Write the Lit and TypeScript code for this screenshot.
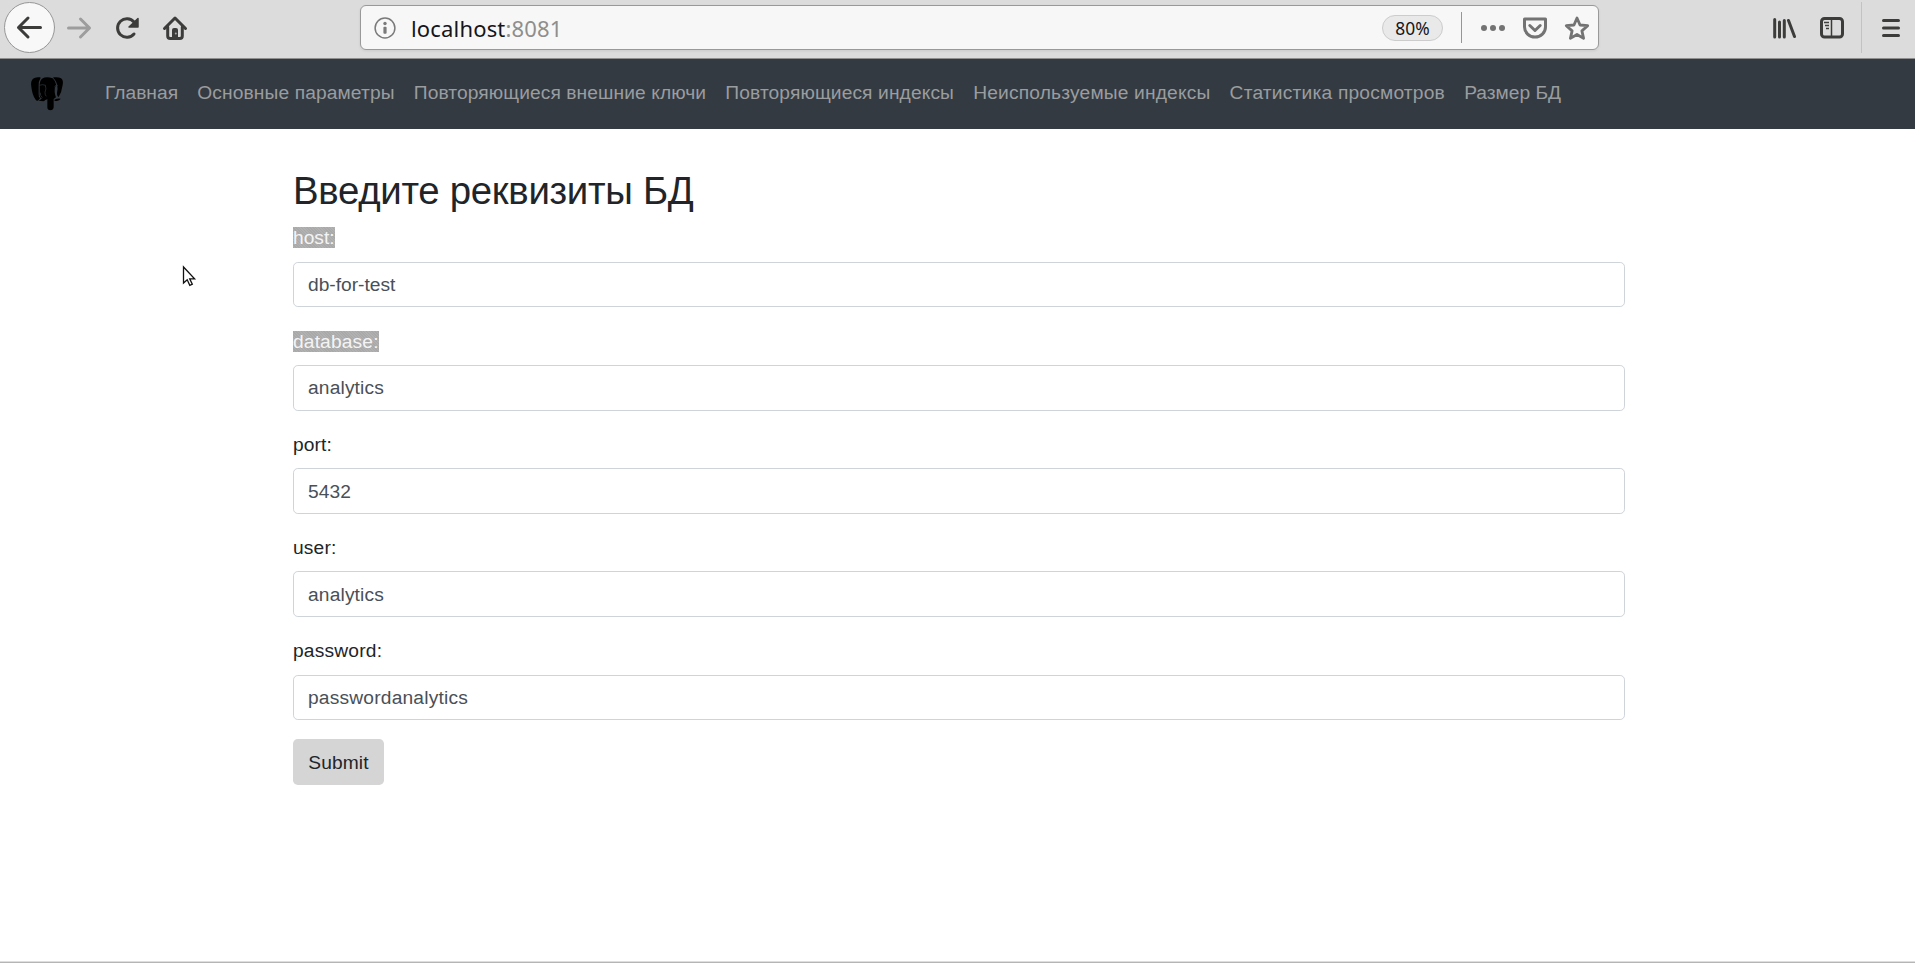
import { LitElement, html, css } from "lit";
import { customElement, property } from "lit/decorators.js";

@customElement("browser-bar")
class BrowserBar extends LitElement {
  static styles = css`
    :host { display: block; }
    .bar { display: flex; align-items: flex-start; height: 58px; background: #dcdcdc; border-bottom: 1px solid #8f8f8f; box-sizing: content-box; }
    svg { display: block; flex: none; }
    .left { display: flex; width: 360px; flex: none; }
    .url { display: flex; align-items: center; box-sizing: border-box; width: 1239px; height: 45px; margin-top: 5px; flex: none; background: #f7f7f7; border: 1px solid #999; border-radius: 6px; box-shadow: 0 1px 3px rgba(0, 0, 0, .08); font-family: "Noto Sans", sans-serif; font-size: 22px; color: #15151a; }
    .info { margin-left: 13px; }
    .address { margin-left: 15px; white-space: nowrap; line-height: 30px; letter-spacing: .17px; }
    .port { color: #8e8e8c; }
    .zoom { margin-left: auto; box-sizing: border-box; width: 61px; height: 26px; border: 1px solid #ccc; border-radius: 13px; background: #e9e9e9; font-size: 17.4px; line-height: 25px; text-align: center; }
    .sep { width: 1px; height: 31px; background: #969696; margin-left: 18px; }
    .actions { margin-left: 13px; margin-right: 5px; }
    .right { margin-left: auto; }
  `;
  render() {
    return html`<div class="bar">
      <div class="left">
        <svg width="200" height="58" viewBox="0 0 200 58" fill="none" stroke="#3c3c3b" stroke-width="3" stroke-linecap="round" stroke-linejoin="round">
          <circle cx="29.5" cy="27.5" r="25" fill="#f8f8f8" stroke="#969696" stroke-width="1"/>
          <path d="M40.5 27.5H18.5M28 18l-9.5 9.5L28 37"/>
          <path stroke="#9d9d9d" d="M68.500 28H89M80.500 19l9 9-9 9"/>
          <path d="M134 34a9.300 9.300 0 1 1 0-12l2 3"/>
          <path fill="#3c3c3b" stroke-width="1.500" d="M138 18.500v8.500h-9z"/>
          <path d="M164.500 28.500L175 18l10.500 10.500"/>
          <path d="M167.700 27v9q0 2.500 2.500 2.500h9.600q2.500 0 2.500-2.500v-9"/>
          <path fill="#3c3c3b" stroke="none" d="M172 38v-8q0-2 2-2h2q2 0 2 2v8z"/>
          <circle cx="175.800" cy="33.500" r="1" fill="#aaa" stroke="none"/>
        </svg>
      </div>
      <div class="url">
        <svg class="info" width="22" height="22" viewBox="0 0 22 22">
          <circle cx="11" cy="11" r="9.900" fill="none" stroke="#7a7a7a" stroke-width="1.500"/>
          <circle cx="11" cy="6.500" r="1.700" fill="#7a7a7a"/>
          <rect x="9.400" y="9.700" width="3.200" height="7" rx="1" fill="#7a7a7a"/>
        </svg>
        <span class="address">localhost<span class="port">:8081</span></span>
        <span class="zoom">80%</span>
        <span class="sep"></span>
        <svg class="actions" width="118" height="30" viewBox="1475 13 118 30" fill="none" stroke="#737373" stroke-width="3" stroke-linejoin="round" stroke-linecap="round">
          <g fill="#737373" stroke="none"><circle cx="1484" cy="28" r="3"/><circle cx="1493" cy="28" r="3"/><circle cx="1502" cy="28" r="3"/></g>
          <path d="M1524.500 19h21v8a10.500 10 0 0 1-21 0z"/>
          <path d="M1529.800 25.500l5.200 5 5.200-5"/>
          <path stroke-width="2.800" d="M1577 18l3 7 7.700.7-5.800 5.200 1.700 7.500-6.600-3.900-6.600 3.900 1.700-7.500-5.800-5.200 7.700-.7z"/>
        </svg>
      </div>
      <svg class="right" width="175" height="58" viewBox="1740 0 175 58" fill="none" stroke="#3c3c3b" stroke-width="3" stroke-linecap="round">
        <path d="M1774.700 19.500v17.500M1779.500 22v15M1784.300 20.500v16.500M1788.500 20.500l6 16"/>
        <rect x="1821.500" y="18.500" width="21" height="18.500" rx="3"/>
        <path stroke-width="1.500" stroke-linecap="butt" d="M1831.500 18v19"/>
        <path stroke-width="1.300" stroke-linecap="butt" d="M1824 22.500h5M1825 25.500h4M1826 28.500h3"/>
        <path stroke="#c2c2c2" stroke-width="1" stroke-linecap="butt" d="M1861.500 2v51"/>
        <path d="M1883.500 20.500h15M1883.500 28h15M1883.500 35.500h15"/>
      </svg>
    </div>`;
  }
}

@customElement("site-nav")
class SiteNav extends LitElement {
  static styles = css`
    :host { display: block; }
    nav { display: flex; align-items: center; box-sizing: border-box; height: 70px; padding-left: 30px; background: #343a42; font-family: "Liberation Sans", Arial, sans-serif; font-size: 19.2px; line-height: 28.8px; }
    .logo { display: block; margin-right: 41px; margin-bottom: 1px; }
    .links { display: flex; gap: 19.2px; margin-bottom: 2px; }
    .link { color: #9a9d9f; white-space: nowrap; text-decoration: none; }
  `;
  items: [string, number][] = [
    ["Главная", 0],
    ["Основные параметры", 0.12],
    ["Повторяющиеся внешние ключи", 0.09],
    ["Повторяющиеся индексы", 0.11],
    ["Неиспользуемые индексы", 0.17],
    ["Статистика просмотров", 0.2],
    ["Размер БД", 0],
  ];
  render() {
    return html`<nav>
      <svg class="logo" width="34" height="35" viewBox="90 230 102 105">
        <path d="M120 234q-14-2-21 4-8 7-5 25 3 24 12 37 5 8 10 2l5-6q-6-3-5-12V260q-1-14 6-25z"/>
        <path d="M126 238q13-8 32-1 9 8 11 21-7 8-5 20 1 9 4 16l-7 5v25q-1 9-10 9-9 0-9-9v-25q-5 4-12 2-9-3-11-11V260q0-16 7-22z"/>
        <path d="M160 234q16-2 23 3 8 5 5 20-3 22-12 36-5-1-5-12 3-11 1-20-2-16-12-25z"/>
        <path d="M116 304l8-5h12q1 6-6 7zM163 301q10-5 19-3-4 7-18 7z"/>
        <path fill="none" stroke="#343a42" stroke-width="2" d="M118 258q9-4 19 0M136 258q4 10-1 21 0 9 4 12M121 280q-1 9 6 15M174 258q-7-2-9 2 2 8 1 15"/>
      </svg>
      <div class="links">${this.items.map(([t, s]) => html`<a class="link" style="letter-spacing:${s}px">${t}</a>`)}</div>
    </nav>`;
  }
}

@customElement("form-field")
class FormField extends LitElement {
  @property() label = "";
  @property() value = "";
  @property({ type: Boolean }) selected = false;
  @property({ type: Number }) index = 0;
  @property({ type: Number }) tracking = 0;
  static styles = css`
    :host { display: block; height: 84px; margin-bottom: 19.15px; }
    .label { display: block; box-sizing: border-box; height: 28.8px; margin-bottom: 9.6px; line-height: 28.8px; color: #212529; }
    .lower { padding-top: 1px; }
    .mark { display: inline-block; height: 21px; line-height: 21px; color: #f4f4f4; background: repeating-linear-gradient(45deg, #a9a9a9 0 1px, #b1b1b1 1px 2px); }
    .input { display: block; box-sizing: border-box; width: 100%; height: 45.6px; padding: 7.2px 14px; border: 1px solid #ced4da; border-radius: 4.8px; background: #fff; color: #495057; font: inherit; letter-spacing: inherit; outline: none; }
    .short { height: 45px; padding-bottom: 6.6px; }
    .drop { padding-top: 8.2px; padding-bottom: 6.2px; }
  `;
  render() {
    const inputClass = this.index === 0 ? "input short" : this.index > 1 ? "input drop" : "input";
    return html`<div style="letter-spacing:${this.tracking}px">
      <label class=${this.index ? "label lower" : "label"}><span class=${this.selected ? "mark" : ""}>${this.label}</span></label>
      <input class=${inputClass} .value=${this.value}>
    </div>`;
  }
}

@customElement("app-root")
class AppRoot extends LitElement {
  static styles = css`
    :host { display: flex; flex-direction: column; position: relative; height: 963px; box-sizing: border-box; overflow: hidden; background: #fff; border-bottom: 1px solid #b5b5b5; }
    .content { flex: 1; box-sizing: border-box; width: 1332px; margin-left: 293px; padding-top: 39px; font-family: "Liberation Sans", Arial, sans-serif; font-size: 19.2px; line-height: 28.8px; color: #212529; }
    .title { margin: 0 0 9.6px; font-size: 38.4px; font-weight: 400; line-height: 46px; letter-spacing: -.3px; }
    .submit { display: block; box-sizing: border-box; height: 45.6px; width: 91px; padding: 2px 0 0; border: 0; border-radius: 4.8px; background: #d5d5d5; color: #212529; font: inherit; letter-spacing: .1px; }
    .edge { height: 1px; background: #dedede; }
    .cursor { position: absolute; left: 182px; top: 265px; }
  `;
  fields = [
    ["host:", "db-for-test", true, 0],
    ["database:", "analytics", true, 0.15],
    ["port:", "5432", false, 0.1],
    ["user:", "analytics", false, 0.15],
    ["password:", "passwordanalytics", false, 0.19],
  ] as [string, string, boolean, number][];
  render() {
    return html`
      <browser-bar></browser-bar>
      <site-nav></site-nav>
      <main class="content">
        <h2 class="title">Введите реквизиты БД</h2>
        ${this.fields.map(([l, v, s, t], i) => html`<form-field .label=${l} .value=${v} .selected=${s} .tracking=${t} .index=${i}></form-field>`)}
        <button class="submit">Submit</button>
      </main>
      <div class="edge"></div>
      <svg class="cursor" width="16" height="24" viewBox="0 0 16 24"><path fill="#fff" stroke="#111" stroke-width="1.300" d="M1.500 2v16l3.700-3.300 2.600 5.600 2.500-1.100-2.600-5.400h4.900z"/></svg>
    `;
  }
}
